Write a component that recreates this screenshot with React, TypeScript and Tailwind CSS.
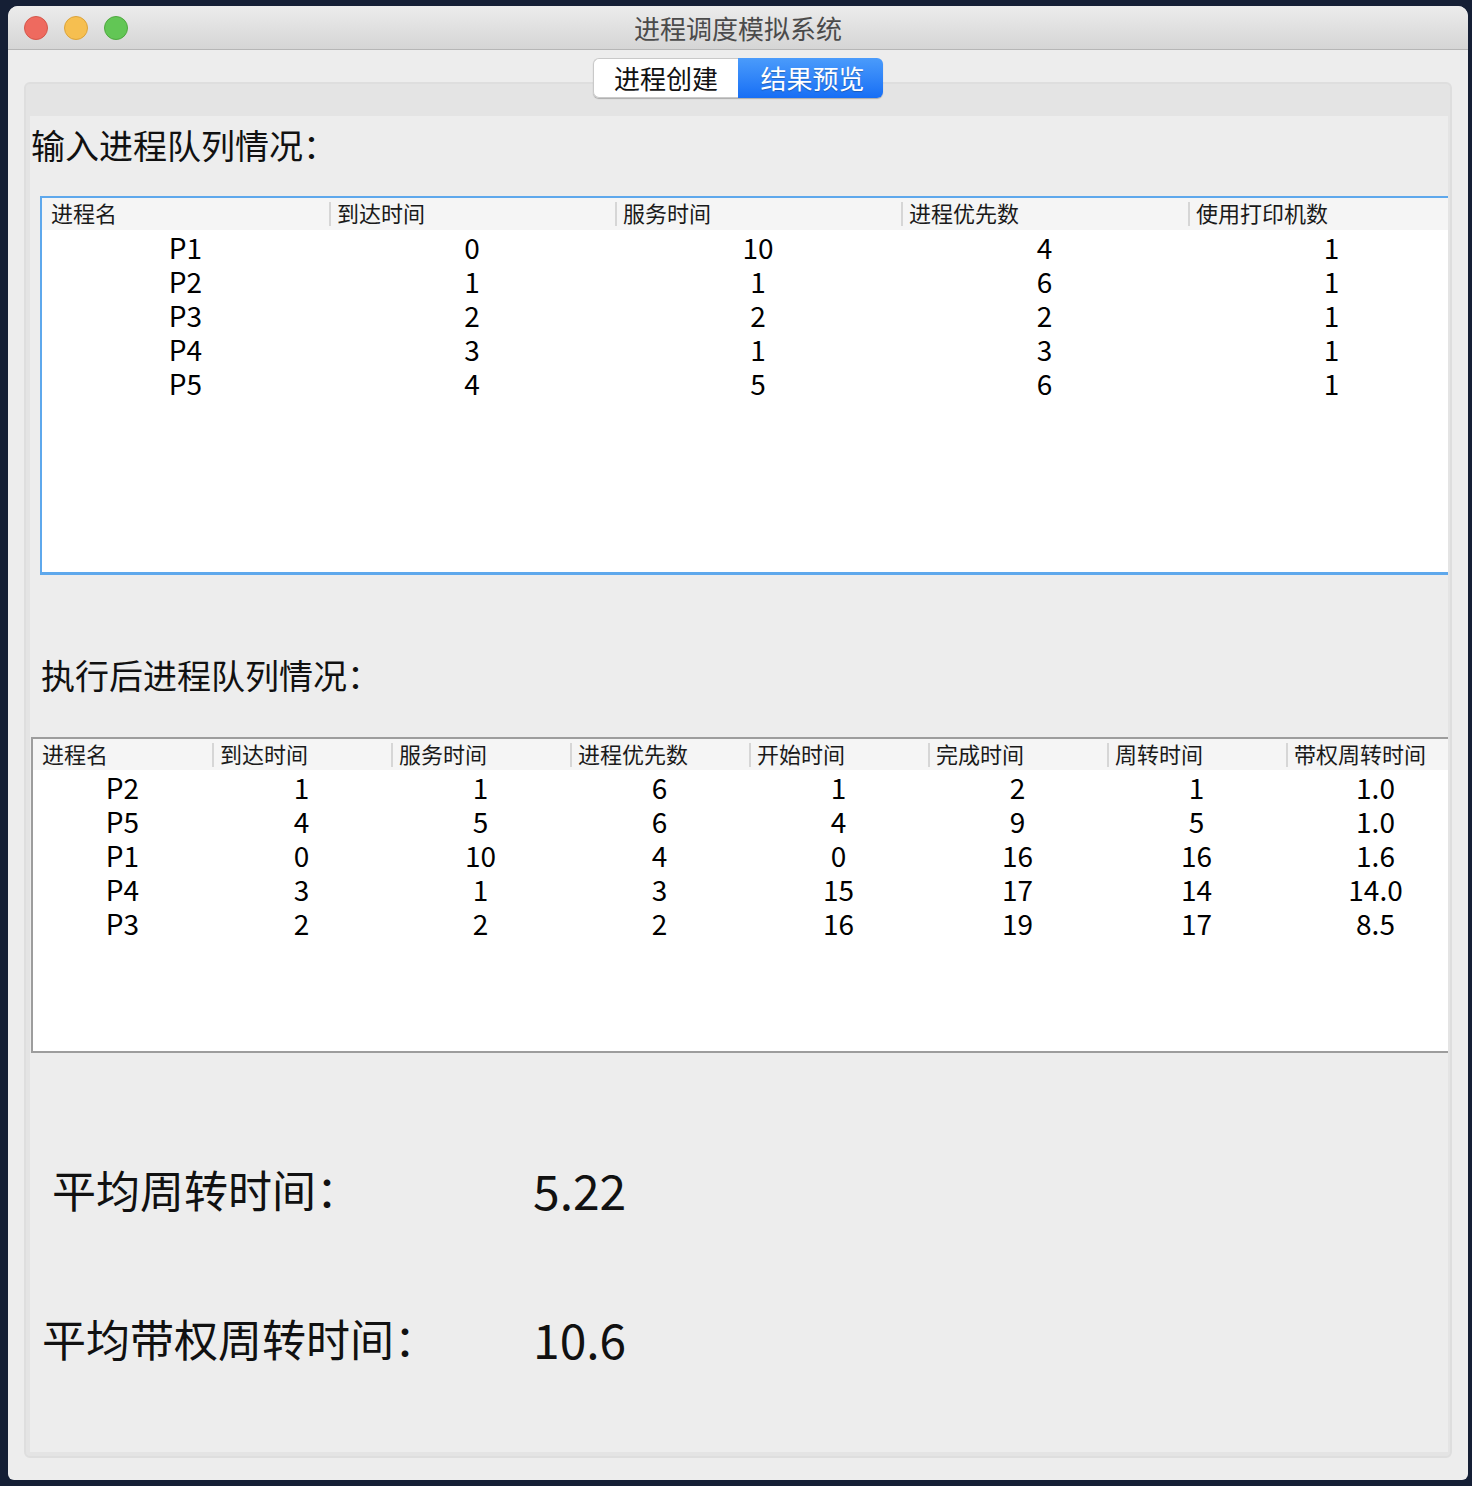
import React from "react";

const t1Headers = ["进程名", "到达时间", "服务时间", "进程优先数", "使用打印机数"];
const t1Rows = [
  ["P1", "0", "10", "4", "1"],
  ["P2", "1", "1", "6", "1"],
  ["P3", "2", "2", "2", "1"],
  ["P4", "3", "1", "3", "1"],
  ["P5", "4", "5", "6", "1"],
];
const t2Headers = ["进程名", "到达时间", "服务时间", "进程优先数", "开始时间", "完成时间", "周转时间", "带权周转时间"];
const t2Rows = [
  ["P2", "1", "1", "6", "1", "2", "1", "1.0"],
  ["P5", "4", "5", "6", "4", "9", "5", "1.0"],
  ["P1", "0", "10", "4", "0", "16", "16", "1.6"],
  ["P4", "3", "1", "3", "15", "17", "14", "14.0"],
  ["P3", "2", "2", "2", "16", "19", "17", "8.5"],
];

function HeaderCell({ label, first }: { label: string; first: boolean }) {
  return (
    <div className="flex items-center h-full">
      {first ? (
        <div className="w-[9px]" />
      ) : (
        <div className="w-[2px] h-[24px] bg-[#d6d6d6] mr-[6px]" />
      )}
      <span className="text-[22px] leading-[22px] mb-[4px] text-[#1a1a1a] whitespace-nowrap">{label}</span>
    </div>
  );
}

export default function App() {
  return (
    <div className="w-[1472px] h-[1486px] bg-[#151f35] pt-[6px] pl-[8px] font-['Noto_Sans_CJK_SC',sans-serif]">
      <div className="w-[1460px] h-[1474px] rounded-t-[10px] rounded-b-[6px] overflow-hidden bg-[#ededed] flex flex-col">
        {/* Title bar */}
        <div className="relative h-[44px] shrink-0 bg-gradient-to-b from-[#ececec] to-[#d5d5d5] border-b border-[#b6b6b6] flex items-center">
          <div className="flex items-center gap-[16px] pl-[16px]">
            <div className="w-[24px] h-[24px] rounded-full bg-[#ee6a5f] border border-[#d4574b]" />
            <div className="w-[24px] h-[24px] rounded-full bg-[#f6bf50] border border-[#dba33a]" />
            <div className="w-[24px] h-[24px] rounded-full bg-[#62c655] border border-[#4ea83f]" />
          </div>
          <div className="absolute inset-0 flex items-center justify-center text-[26px] text-[#4b4b4b] leading-none">
            进程调度模拟系统
          </div>
        </div>

        {/* Body */}
        <div className="flex-1 flex flex-col px-[16px] pb-[22px]">
          {/* Tabs */}
          <div className="relative z-10 flex justify-center mt-[8px] h-[40px] -mb-[16px]">
            <div className="flex h-[40px] rounded-[6px] shadow-[0_1px_1px_rgba(0,0,0,0.25)]">
              <div className="w-[145px] h-full flex items-center justify-center bg-white border border-[#c9c9c9] border-r-0 rounded-l-[6px] text-[26px] text-[#111] leading-none">
                进程创建
              </div>
              <div className="w-[145px] h-full flex items-center justify-center pl-[4px] bg-gradient-to-b from-[#4a9bfb] to-[#166ef5] rounded-r-[6px] text-[26px] text-white leading-none [text-shadow:0_1px_1px_rgba(0,0,0,0.25)]">
                结果预览
              </div>
            </div>
          </div>

          {/* Panel */}
          <div className="flex-1 rounded-[6px] border-2 border-[#dedede] bg-[#e4e4e4] pt-[32px] pl-[4px] pr-[2px] pb-[4px] flex flex-col">
            <div className="flex-1 bg-[#ededed] overflow-hidden flex flex-col">
              {/* Title 1 */}
              <div className="mt-[5px] h-[48px] flex items-center pl-[1px] text-[34px] leading-none text-[#111]">
                输入进程队列情况：
              </div>

              {/* Table 1 */}
              <div className="mt-[27px] ml-[10px] w-[1437px] h-[379px] shrink-0 border-2 border-b-[3px] border-[#5ea8ec] bg-white">
                <div className="grid grid-cols-[287px_286px_286px_287px_287px] h-[32px] bg-[#f5f5f5]">
                  {t1Headers.map((h, i) => (
                    <HeaderCell key={h} label={h} first={i === 0} />
                  ))}
                </div>
                <div>
                  {t1Rows.map((r, ri) => (
                    <div key={ri} className="grid grid-cols-[287px_286px_286px_287px_287px] h-[34px]">
                      {r.map((c, ci) => (
                        <div key={ci} className="flex items-center justify-center text-[28px] leading-[28px] text-black">
                          {c}
                        </div>
                      ))}
                    </div>
                  ))}
                </div>
              </div>

              {/* Title 2 */}
              <div className="mt-[76px] h-[48px] flex items-center pl-[11px] text-[34px] leading-none text-[#111]">
                执行后进程队列情况：
              </div>

              {/* Table 2 */}
              <div className="mt-[38px] ml-[1px] w-[1440px] h-[316px] shrink-0 border-2 border-[#9d9d9d] bg-white">
                <div className="grid grid-cols-[repeat(8,179px)] h-[31px] bg-[#f5f5f5]">
                  {t2Headers.map((h, i) => (
                    <HeaderCell key={h} label={h} first={i === 0} />
                  ))}
                </div>
                <div>
                  {t2Rows.map((r, ri) => (
                    <div key={ri} className="grid grid-cols-[repeat(8,179px)] h-[34px]">
                      {r.map((c, ci) => (
                        <div key={ci} className="flex items-center justify-center text-[28px] leading-[28px] text-black">
                          {c}
                        </div>
                      ))}
                    </div>
                  ))}
                </div>
              </div>

              {/* Averages */}
              <div className="mt-[106px] h-[60px] flex items-center text-[#111]">
                <div className="w-[503px] pl-[22px] text-[44px] leading-none">平均周转时间：</div>
                <div className="text-[48px] leading-none">5.22</div>
              </div>
              <div className="mt-[89px] h-[60px] flex items-center text-[#111]">
                <div className="w-[503px] pl-[12px] text-[44px] leading-none">平均带权周转时间：</div>
                <div className="text-[48px] leading-none">10.6</div>
              </div>
            </div>
          </div>
        </div>
      </div>
    </div>
  );
}
